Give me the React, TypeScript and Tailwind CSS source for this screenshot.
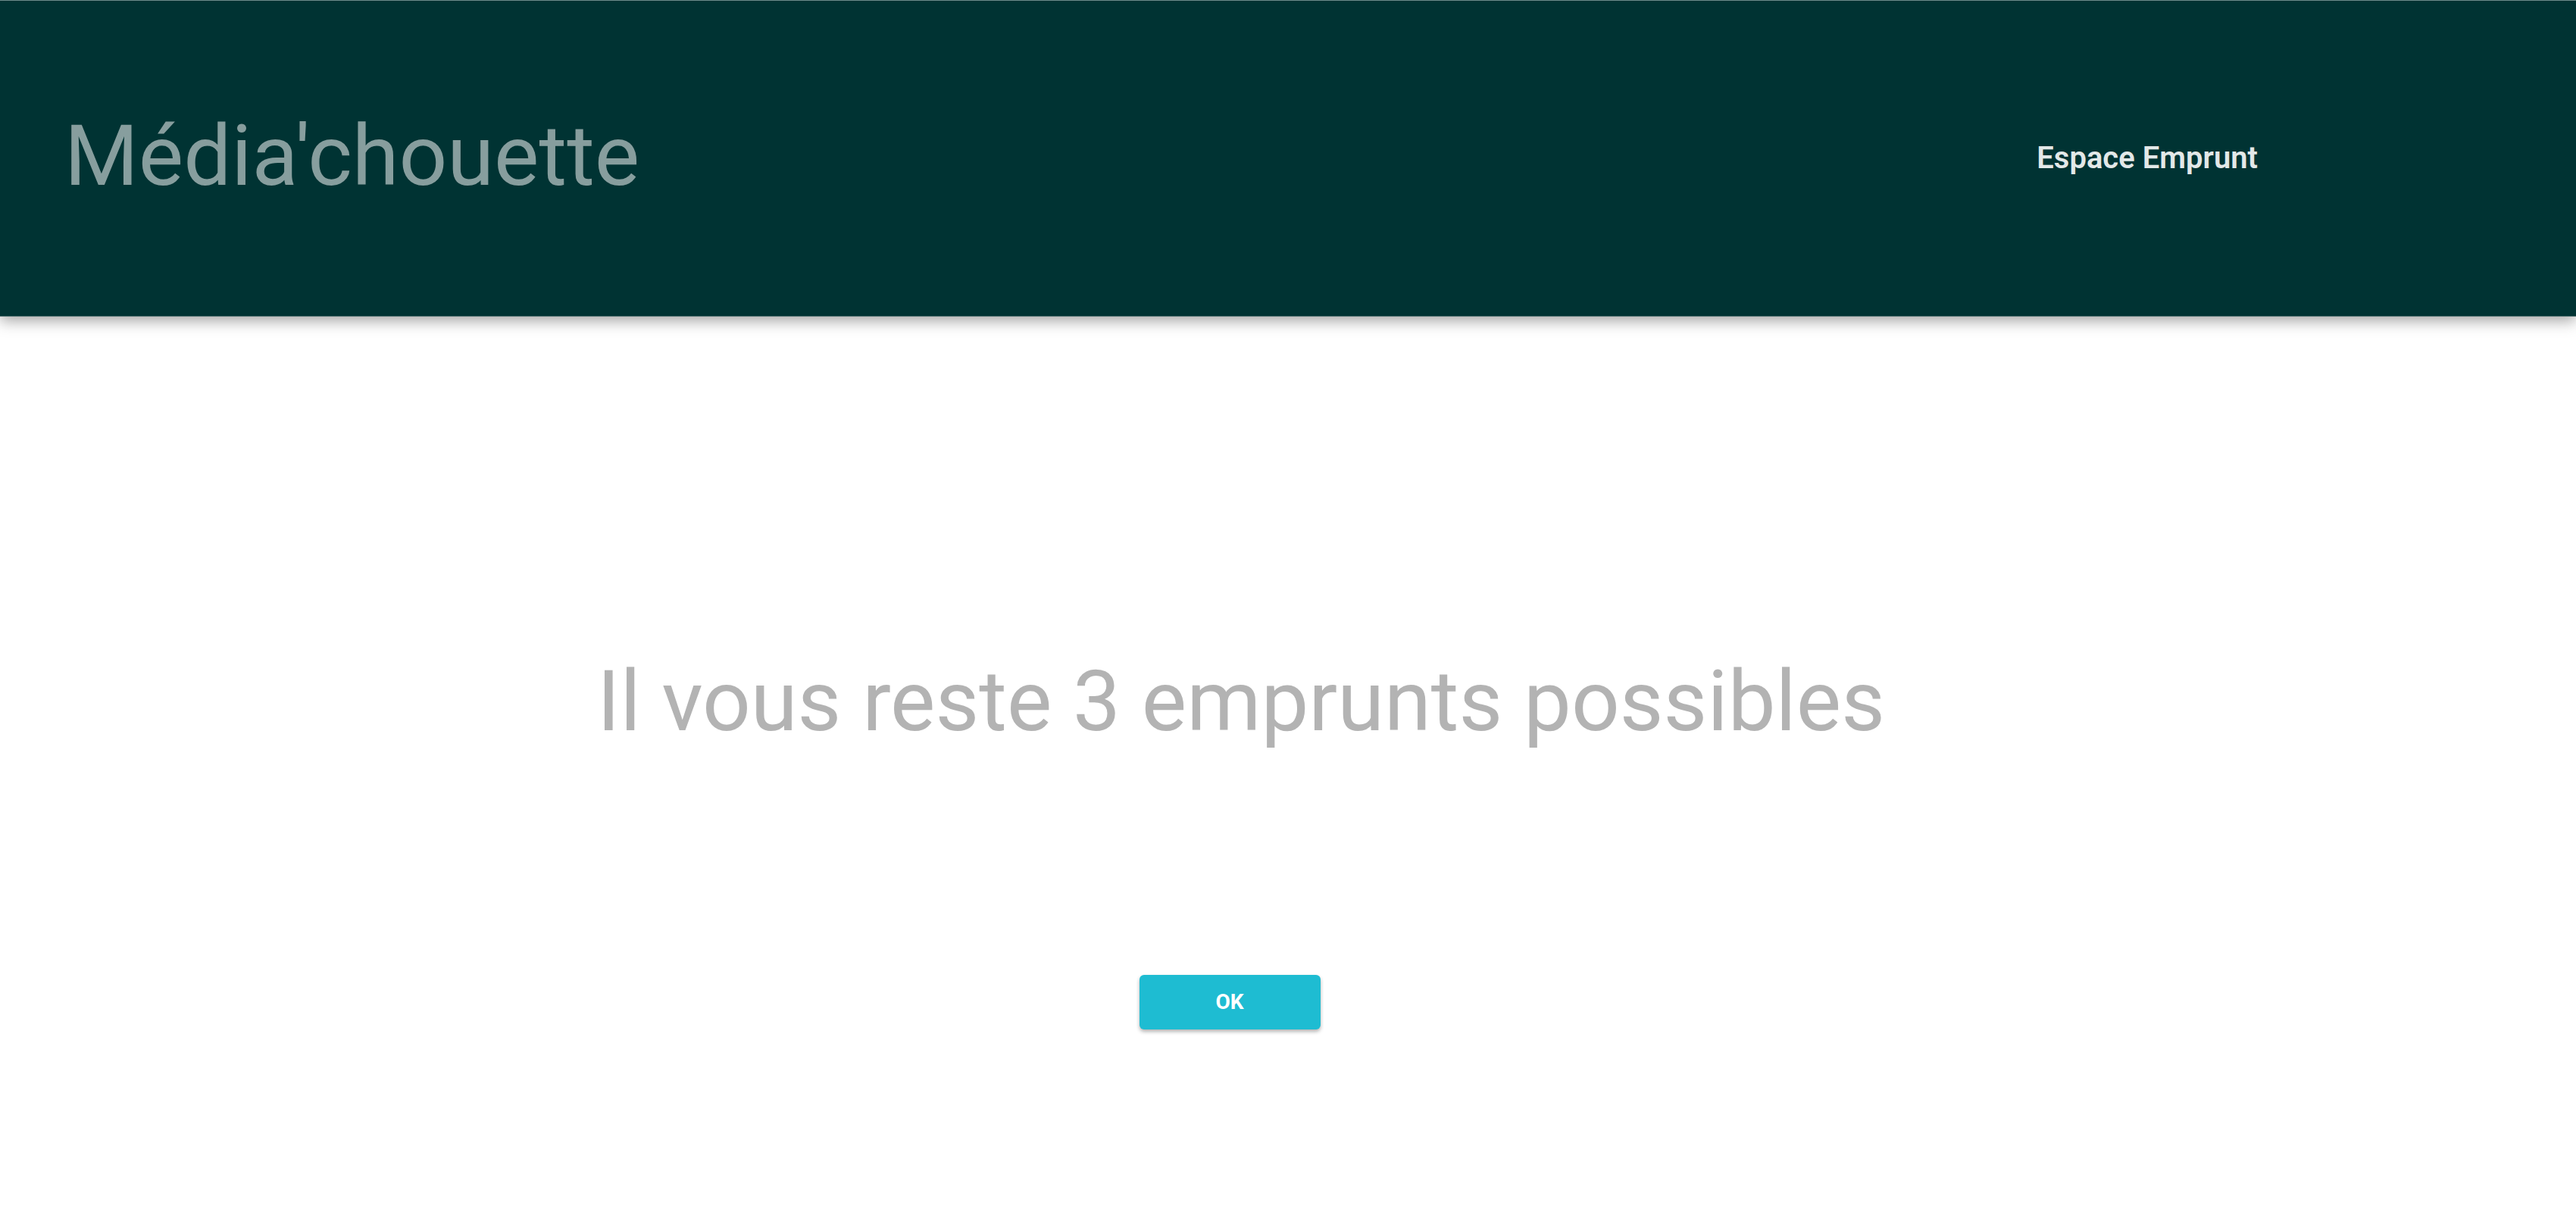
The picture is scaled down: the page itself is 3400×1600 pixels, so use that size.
import React from "react";

export default function App() {
  return (
    <div className="min-h-[1600px] w-full bg-white" style={{ fontFamily: "Roboto, 'Noto Sans', sans-serif" }}>
      <header className="relative z-10 flex h-[418px] w-full items-center justify-between border-t border-b border-t-[#6f8c8c] border-b-[#4f7070] bg-[#003333] shadow-[0_6px_18px_rgba(0,0,0,0.35)]">
        <div className="pl-[85px] text-[112px] font-normal leading-none text-[#879e9e] -mt-[6px]">Média'chouette</div>
        <nav className="pr-[420px]">
          <span className="text-[40px] font-semibold leading-none text-[#e3e8e8]">Espace Emprunt</span>
        </nav>
      </header>
      <main className="flex flex-col">
        <div className="flex justify-center pr-[124px] pt-[452px]">
          <h1 className="text-[112px] font-normal leading-none text-[#b3b3b3]">Il vous reste 3 emprunts possibles</h1>
        </div>
        <div className="flex justify-center pr-[154px] pt-[305px]">
          <button className="h-[72px] w-[239px] rounded-[6px] bg-[#1ebcd2] text-[28px] font-bold text-white shadow-[0_3px_5px_rgba(0,0,0,0.3)]">
            OK
          </button>
        </div>
      </main>
    </div>
  );
}
